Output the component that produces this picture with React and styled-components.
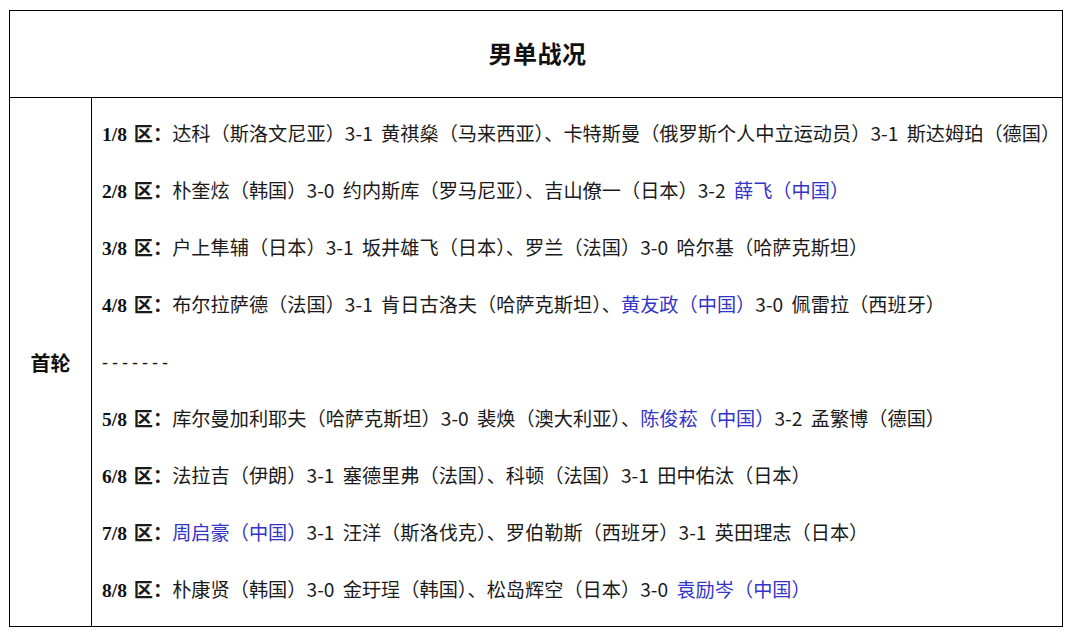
import React from 'react'
import styled, {createGlobalStyle} from 'styled-components'

const GlobalStyle = createGlobalStyle`
  html, body {
    margin: 0;
    padding: 0;
    background: #fff;
  }
  body {
    font-family: "Noto Sans CJK SC", "Liberation Sans", sans-serif;
    color: #1a1a1a;
  }
`

const Page = styled.div`
  width: 1072px;
  height: 635px;
  padding: 10px 0 0 9px;
  box-sizing: border-box;
`

const Table = styled.div`
  width: 1054px;
  height: 617px;
  box-sizing: border-box;
  border: 1px solid #000;
  display: grid;
  grid-template-columns: 82px 1fr;
  grid-template-rows: 87px 1fr;
`

const TitleCell = styled.div`
  grid-column: 1 / span 2;
  border-bottom: 1px solid #000;
  display: flex;
  align-items: center;
  justify-content: center;
  font-size: 24px;
  font-weight: 700;
  color: #111;
  padding: 0 0 3px 3px;
  letter-spacing: 0.5px;
`

const RoundCell = styled.div`
  border-right: 1px solid #000;
  display: flex;
  align-items: center;
  justify-content: center;
  font-size: 20px;
  font-weight: 700;
  color: #111;
`

const MatchList = styled.div`
  padding: 7px 0 0 10px;
`

const Line = styled.div`
  height: 57px;
  line-height: 57px;
  white-space: pre;
  font-size: 19.2px;
  word-spacing: 4px;
`

const Zone = styled.span`
  font-family: "Liberation Serif", "Noto Sans CJK SC", serif;
  font-weight: 700;
  color: #111;
  font-size: 19.5px;
  word-spacing: 2px;
`

const ZoneMark = styled.span`
  font-family: "Noto Sans CJK SC", sans-serif;
  font-weight: 700;
`

const Seg = styled.span`
  color: ${props => props.$cn ? '#3434c8' : '#1a1a1a'};
`

const Dashes = styled.span`
  font-family: "Liberation Sans", sans-serif;
  letter-spacing: 4px;
  font-size: 18px;
`

const matches = [
  {zone: '1/8', parts: [['达科（斯洛文尼亚）3-1 黄祺燊（马来西亚）、卡特斯曼（俄罗斯个人中立运动员）3-1 斯达姆珀（德国）']]},
  {zone: '2/8', parts: [['朴奎炫（韩国）3-0 约内斯库（罗马尼亚）、吉山僚一（日本）3-2 '], ['薛飞（中国）', true]]},
  {zone: '3/8', parts: [['户上隼辅（日本）3-1 坂井雄飞（日本）、罗兰（法国）3-0 哈尔基（哈萨克斯坦）']]},
  {zone: '4/8', parts: [['布尔拉萨德（法国）3-1 肯日古洛夫（哈萨克斯坦）、'], ['黄友政（中国）', true], ['3-0 佩雷拉（西班牙）']]},
  {divider: true},
  {zone: '5/8', parts: [['库尔曼加利耶夫（哈萨克斯坦）3-0 裴焕（澳大利亚）、'], ['陈俊菘（中国）', true], ['3-2 孟繁博（德国）']]},
  {zone: '6/8', parts: [['法拉吉（伊朗）3-1 塞德里弗（法国）、科顿（法国）3-1 田中佑汰（日本）']]},
  {zone: '7/8', parts: [['周启豪（中国）', true], ['3-1 汪洋（斯洛伐克）、罗伯勒斯（西班牙）3-1 英田理志（日本）']]},
  {zone: '8/8', parts: [['朴康贤（韩国）3-0 金玗珵（韩国）、松岛辉空（日本）3-0 '], ['袁励岑（中国）', true]]},
]

export default function App() {
  return (
    <Page>
      <GlobalStyle />
      <Table>
        <TitleCell>男单战况</TitleCell>
        <RoundCell>首轮</RoundCell>
        <MatchList>
          {matches.map((m, i) => (
            <Line key={i}>
              {m.divider ? (
                <Dashes>-------</Dashes>
              ) : (
                <>
                  <Zone>{m.zone + ' '}</Zone>
                  <ZoneMark>区：</ZoneMark>
                  {m.parts.map(([t, cn], j) => (
                    <Seg key={j} $cn={cn}>{t}</Seg>
                  ))}
                </>
              )}
            </Line>
          ))}
        </MatchList>
      </Table>
    </Page>
  )
}
